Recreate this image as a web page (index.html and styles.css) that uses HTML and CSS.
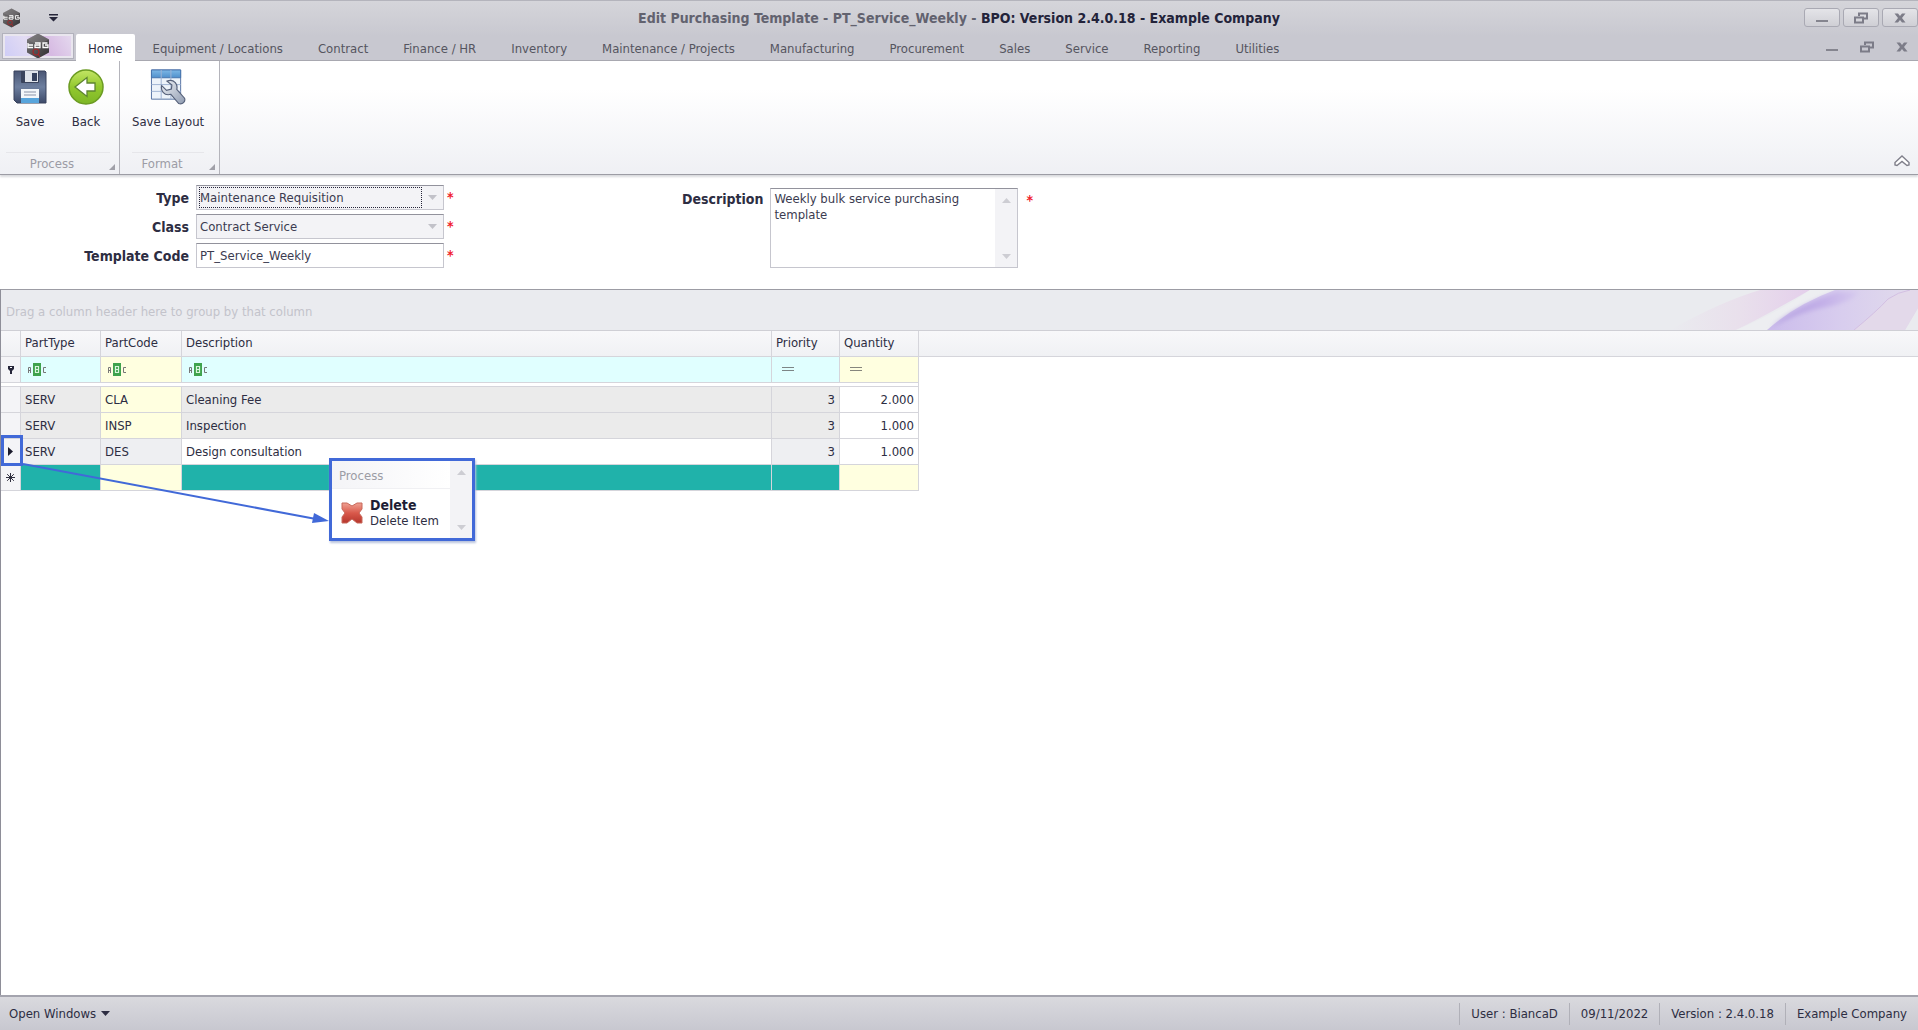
FILE: index.html
```html
<!DOCTYPE html>
<html lang="en">
<head>
    <meta charset="UTF-8">
    <meta name="viewport" content="width=device-width, initial-scale=1.0">
    <title>Edit Purchasing Template</title>
    <link rel="stylesheet" href="styles.css">
</head>
<body>
    <!-- Shared shapes -->
    <svg class="defs" width="0" height="0" aria-hidden="true">
        <defs>
            <linearGradient id="hexFill" x1="0" y1="0" x2="1" y2="1">
                <stop offset="0" stop-color="#7d7b7d"/>
                <stop offset="1" stop-color="#2f2d30"/>
            </linearGradient>
            <symbol id="logo" viewBox="0 0 24 26">
                <path d="M12 0.5 23 6.5V19.5L12 25.5 1 19.5V6.5Z" fill="url(#hexFill)"/>
                <path d="M12 0.5 1 6.5 12 12 23 6.5Z" fill="#8a888a" opacity=".4"/>
                <path d="M2 10v4.500h5M2 12h5M9 10h5v4.500H9V12h5M21.500 10H17v4.500h5V12h-3" fill="none" stroke="#fff" stroke-width="1.3"/>
                <circle cx="10" cy="19" r="3" fill="none" stroke="#a3282c" stroke-width="1.2"/>
                <path d="M12 21l2 3" stroke="#a3282c" stroke-width="1.2"/>
            </symbol>
            <symbol id="min" viewBox="0 0 14 12"><path d="M1 9h12" stroke="#85858f" stroke-width="2"/></symbol>
            <symbol id="restore" viewBox="0 0 14 12">
                <path d="M5 4V1.500h8v5H10" fill="none" stroke="#7c7c88" stroke-width="2"/>
                <path d="M1 5.500h8v5H1z" fill="none" stroke="#7c7c88" stroke-width="2"/>
            </symbol>
            <symbol id="close" viewBox="0 0 14 12">
                <path d="M1.500 1.500h3.500L7 4l2-2.500h3.500L9 6l3.500 4.500H9L7 8l-2 2.500H1.500L5 6z" fill="#7c7c88"/>
            </symbol>
            <symbol id="abc" viewBox="0 0 20 15">
                <path d="M6 1h8v13H6z" fill="#3fa34d"/>
                <path d="M1.500 11V5.500h2V11M1.500 8.500h2M19 5.500h-2.500v5H19" fill="none" stroke="#777" stroke-width="1"/>
                <path d="M8.500 4.500h3v6h-3zM8.500 7.500h3" fill="none" stroke="#d9f5dc" stroke-width="1.2"/>
            </symbol>
            <symbol id="up" viewBox="0 0 9 5"><path d="M0 5 4.500 0 9 5z" fill="currentColor"/></symbol>
            <symbol id="down" viewBox="0 0 9 5"><path d="M0 0h9L4.500 5z" fill="currentColor"/></symbol>
        </defs>
    </svg>

    <header class="window-head">
        <div class="title-bar">
            <div class="quick-access">
                <svg width="19" height="20"><use href="#logo"/></svg>
                <button class="quick-menu" aria-label="Customize quick access toolbar">
                    <svg width="9" height="8" viewBox="0 0 9 8"><path d="M0 0h9v1.500H0zM0 3h9L4.500 7.500z" fill="#26263a"/></svg>
                </button>
            </div>
            <h1 class="title"><span class="title-doc">Edit Purchasing Template - PT_Service_Weekly -</span> BPO: Version 2.4.0.18 - Example Company</h1>
            <div class="window-buttons">
                <button aria-label="Minimize"><svg width="14" height="12"><use href="#min"/></svg></button>
                <button aria-label="Restore"><svg width="14" height="12"><use href="#restore"/></svg></button>
                <button aria-label="Close"><svg width="14" height="12"><use href="#close"/></svg></button>
            </div>
        </div>
        <div class="tab-row">
            <button class="app-button" aria-label="Application menu"><svg width="24" height="26"><use href="#logo"/></svg></button>
            <nav class="tabs">
                <a class="tab active" href="#">Home</a>
                <a class="tab" href="#">Equipment / Locations</a>
                <a class="tab" href="#">Contract</a>
                <a class="tab" href="#">Finance / HR</a>
                <a class="tab" href="#">Inventory</a>
                <a class="tab" href="#">Maintenance / Projects</a>
                <a class="tab" href="#">Manufacturing</a>
                <a class="tab" href="#">Procurement</a>
                <a class="tab" href="#">Sales</a>
                <a class="tab" href="#">Service</a>
                <a class="tab" href="#">Reporting</a>
                <a class="tab" href="#">Utilities</a>
            </nav>
            <div class="child-buttons">
                <button aria-label="Minimize document"><svg width="14" height="12"><use href="#min"/></svg></button>
                <button aria-label="Restore document"><svg width="14" height="12"><use href="#restore"/></svg></button>
                <button aria-label="Close document"><svg width="14" height="12"><use href="#close"/></svg></button>
            </div>
        </div>
    </header>

    <section class="ribbon">
        <div class="ribbon-group">
            <div class="ribbon-items">
                <button class="ribbon-button">
                    <svg width="36" height="36" viewBox="0 0 36 36">
                        <defs><linearGradient id="disk" x1="0" y1="0" x2="0" y2="1"><stop offset="0" stop-color="#4a5674"/><stop offset=".5" stop-color="#6d7f9f"/><stop offset="1" stop-color="#3d4a69"/></linearGradient></defs>
                        <path d="M2 2h31l1 1v31H5l-3-3z" fill="url(#disk)" stroke="#38425d"/>
                        <path d="M9 2h18v11q0 1-1 1H10q-1 0-1-1z" fill="#39435c"/>
                        <path d="M13 2h13v11H13z" fill="#dfe3ea"/>
                        <path d="M20 4h5v8h-5z" fill="#34405c"/>
                        <path d="M9 20h18v9H9z" fill="#f4f7fa"/>
                        <path d="M9 29h18v5H9z" fill="#58a5dc"/>
                        <path d="M12 23h12M12 26h12" stroke="#8b93a8"/>
                    </svg>
                    <span>Save</span>
                </button>
                <button class="ribbon-button">
                    <svg width="36" height="36" viewBox="0 0 36 36">
                        <defs><linearGradient id="ball" x1="0" y1="0" x2="0" y2="1"><stop offset="0" stop-color="#c3e565"/><stop offset=".5" stop-color="#93c92e"/><stop offset="1" stop-color="#7db626"/></linearGradient></defs>
                        <circle cx="18" cy="18" r="17" fill="url(#ball)" stroke="#6b9b22" stroke-width="1.5"/>
                        <path d="M7 18 19 8.500V14h8v8h-8v5.500z" fill="#fff" stroke="#5d8430" stroke-width="1.3"/>
                    </svg>
                    <span>Back</span>
                </button>
            </div>
            <div class="ribbon-caption">Process</div>
            <svg class="launcher" width="6" height="6" viewBox="0 0 6 6"><path d="M6 0v6H0z" fill="#a0a0a8"/></svg>
        </div>
        <div class="ribbon-group">
            <div class="ribbon-items">
                <button class="ribbon-button">
                    <svg width="36" height="36" viewBox="0 0 36 37">
                        <defs>
                            <linearGradient id="sheet" x1="0" y1="0" x2="0" y2="1"><stop offset="0" stop-color="#7db8e6"/><stop offset="1" stop-color="#4f8fcb"/></linearGradient>
                            <linearGradient id="steel" x1="0" y1="0" x2="1" y2="1"><stop offset="0" stop-color="#f0f3f8"/><stop offset="1" stop-color="#8f9bb0"/></linearGradient>
                        </defs>
                        <path d="M1 1h30v30H1z" fill="#edf3fa" stroke="#5672a3"/>
                        <path d="M1 1h30v8H1z" fill="url(#sheet)" stroke="#4673ad"/>
                        <path d="M11 1v30M21 1v30M1 16h30M1 23h30" stroke="#9fb4d3" fill="none"/>
                        <path d="M17 12.500q5-2 8.500 1.500 2.500 3 1.500 7l8 9q1 2.500-1 4.500t-5 1l-8-9.500q-5 1.500-8-2-2.500-3-1.500-7l5 5 5-1.500.5-4z" fill="url(#steel)" stroke="#56617a" stroke-width="1.2"/>
                    </svg>
                    <span>Save Layout</span>
                </button>
            </div>
            <div class="ribbon-caption">Format</div>
            <svg class="launcher" width="6" height="6" viewBox="0 0 6 6"><path d="M6 0v6H0z" fill="#a0a0a8"/></svg>
        </div>
        <button class="collapse" aria-label="Collapse ribbon">
            <svg width="16" height="12" viewBox="0 0 16 12"><path d="M8 1 15 7.500V10l-2 .5L8 6.500 3 10.500 1 10V7.500z" fill="#fff" stroke="#7f7f8a" stroke-width="1.4"/></svg>
        </button>
    </section>

    <main class="document">
        <form class="details">
            <div class="fields">
                <label for="type">Type</label>
                <div class="combo">
                    <select id="type" class="focused"><option>Maintenance Requisition</option></select>
                    <svg width="9" height="5"><use href="#down"/></svg>
                </div>
                <span class="required">*</span>
                <label for="class">Class</label>
                <div class="combo">
                    <select id="class"><option>Contract Service</option></select>
                    <svg width="9" height="5"><use href="#down"/></svg>
                </div>
                <span class="required">*</span>
                <label for="code">Template Code</label>
                <input id="code" class="text-box" type="text" value="PT_Service_Weekly">
                <span class="required">*</span>
            </div>
            <div class="memo-field">
                <label for="description">Description</label>
                <div class="memo">
                    <textarea id="description">Weekly bulk service purchasing template</textarea>
                    <div class="scroller">
                        <svg width="9" height="5"><use href="#up"/></svg>
                        <svg width="9" height="5"><use href="#down"/></svg>
                    </div>
                </div>
                <span class="required">*</span>
            </div>
        </form>

        <section class="grid">
            <div class="group-panel">
                <span>Drag a column header here to group by that column</span>
                <svg class="swirl" width="278" height="40" viewBox="0 0 278 40">
                    <defs>
                        <linearGradient id="pink" x1="0" y1="0" x2="1" y2="0"><stop offset="0" stop-color="#eaebef"/><stop offset=".5" stop-color="#e9e0ec"/><stop offset="1" stop-color="#e4cfeb"/></linearGradient>
                        <linearGradient id="violet" x1="0" y1="0" x2="1" y2="0"><stop offset="0" stop-color="#cbbcec"/><stop offset=".5" stop-color="#d8cdee"/><stop offset="1" stop-color="#e2dcec"/></linearGradient>
                        <linearGradient id="fold" x1="0" y1="0" x2="1" y2="0"><stop offset="0" stop-color="#b39fe0"/><stop offset=".6" stop-color="#c3b0e8"/><stop offset="1" stop-color="#d6caee"/></linearGradient>
                        <filter id="soft"><feGaussianBlur stdDeviation="2"/></filter>
                    </defs>
                    <path d="M30 40Q80 12 120 0h50Q125 26 96 40z" fill="url(#pink)"/>
                    <path d="M96 40Q140 22 170 0h25Q150 18 127 40z" fill="#edeef1"/>
                    <path d="M127 40Q155 15 195 0h83v18L265 40z" fill="url(#violet)"/>
                    <path d="M130 38Q157 15 197 2h22q-7 10-33 15-30 6-56 21z" fill="url(#fold)" filter="url(#soft)"/>
                    <path d="M214 40Q236 22 248 9 258 2 270 0h8v18L265 40z" fill="#e3d9ea"/>
                    <path d="M214 40Q236 22 248 9 258 2 270 0" fill="none" stroke="#d3bfe3"/>
                </svg>
            </div>
            <table>
                <colgroup>
                    <col class="col-mark"><col class="col-type"><col class="col-code"><col class="col-desc"><col class="col-priority"><col class="col-quantity"><col>
                </colgroup>
                <thead>
                    <tr>
                        <th></th>
                        <th>PartType</th>
                        <th>PartCode</th>
                        <th>Description</th>
                        <th>Priority</th>
                        <th>Quantity</th>
                        <th class="rest"></th>
                    </tr>
                </thead>
                <tbody>
                    <tr class="filter">
                        <td class="mark"><svg width="8" height="10" viewBox="0 0 8 10"><path d="M1 1h6v3L5 6v3H3V6L1 4z" fill="#26263a"/><path d="M3 2.500h2" stroke="#fff"/></svg></td>
                        <td class="cyan"><svg width="20" height="15"><use href="#abc"/></svg></td>
                        <td class="cream"><svg width="20" height="15"><use href="#abc"/></svg></td>
                        <td class="cyan"><svg width="20" height="15"><use href="#abc"/></svg></td>
                        <td class="cyan equals"><svg width="12" height="5" viewBox="0 0 12 5"><path d="M0 .5h12M0 3.500h12" stroke="#7d8586"/></svg></td>
                        <td class="cream equals"><svg width="12" height="5" viewBox="0 0 12 5"><path d="M0 .5h12M0 3.500h12" stroke="#86867d"/></svg></td>
                        <td class="rest"></td>
                    </tr>
                    <tr class="splitter"><td colspan="6"></td><td class="rest"></td></tr>
                    <tr>
                        <td class="mark"></td>
                        <td class="locked">SERV</td>
                        <td class="cream">CLA</td>
                        <td class="locked">Cleaning Fee</td>
                        <td class="locked number">3</td>
                        <td class="number">2.000</td>
                        <td class="rest"></td>
                    </tr>
                    <tr>
                        <td class="mark"></td>
                        <td class="locked">SERV</td>
                        <td class="cream">INSP</td>
                        <td class="locked">Inspection</td>
                        <td class="locked number">3</td>
                        <td class="number">1.000</td>
                        <td class="rest"></td>
                    </tr>
                    <tr>
                        <td class="mark current"><svg width="5" height="9" viewBox="0 0 5 9"><path d="M0 0l5 4.500L0 9z" fill="#1b1b2c"/></svg></td>
                        <td class="selected">SERV</td>
                        <td class="selected">DES</td>
                        <td>Design consultation</td>
                        <td class="selected number">3</td>
                        <td class="number">1.000</td>
                        <td class="rest"></td>
                    </tr>
                    <tr>
                        <td class="mark"><svg width="9" height="9" viewBox="0 0 9 9"><path d="M4.500 0v9M0 4.500h9M1.200 1.200l6.600 6.600M7.800 1.200l-6.600 6.600" stroke="#30303f" stroke-width="1"/></svg></td>
                        <td class="teal"></td>
                        <td class="cream"></td>
                        <td class="teal"></td>
                        <td class="teal"></td>
                        <td class="cream"></td>
                        <td class="rest"></td>
                    </tr>
                </tbody>
            </table>

            <!-- Arrow from the selected row to its menu -->
            <svg class="arrow" width="306" height="62" viewBox="0 0 306 62">
                <path d="M0 1 293 56" stroke="#4169d8" stroke-width="2"/>
                <path d="M291 50 306 58 289 60z" fill="#4169d8"/>
            </svg>
            <div class="context-menu">
                <div class="menu-body">
                    <div class="menu-caption">Process</div>
                    <button class="menu-item">
                        <svg width="22" height="22" viewBox="0 0 22 22">
                            <defs><linearGradient id="cross" x1="0" y1="0" x2="0" y2="1"><stop offset="0" stop-color="#efa193"/><stop offset=".5" stop-color="#d9594b"/><stop offset="1" stop-color="#b5362c"/></linearGradient></defs>
                            <path d="M1 1h5l5 3 5-3h5v6l-3 4 3 4v6h-5l-5-4-5 4H1v-6l3-4-3-4z" fill="url(#cross)" stroke="#c8685b"/>
                        </svg>
                        <span><b>Delete</b>Delete Item</span>
                    </button>
                </div>
                <div class="scroller">
                    <svg width="9" height="5"><use href="#up"/></svg>
                    <svg width="9" height="5"><use href="#down"/></svg>
                </div>
            </div>
        </section>
    </main>

    <footer class="status-bar">
        <button class="open-windows">Open Windows <svg width="9" height="5"><use href="#down"/></svg></button>
        <div class="status-items">
            <span>User : BiancaD</span>
            <span>09/11/2022</span>
            <span>Version : 2.4.0.18</span>
            <span>Example Company</span>
        </div>
    </footer>
</body>
</html>
```

FILE: styles.css
```css
* {
    box-sizing: border-box;
}

body {
    display: flex;
    flex-direction: column;
    min-height: 100vh;
    margin: 0;
    background: #fff;
    color: #2d2d42;
    font-family: "DejaVu Sans Condensed", "Noto Sans", sans-serif;
    font-size: 13px;
    line-height: 16px;
}

button,
input,
select,
textarea {
    margin: 0;
    padding: 0;
    border: 0;
    background: none;
    color: inherit;
    font: inherit;
}

svg {
    display: block;
    flex: none;
}

.defs {
    position: absolute;
}

/* Title bar and tabs */
.window-head {
    border-top: 1px solid #b4b4bc;
    border-bottom: 1px solid #a8a8b0;
    background: linear-gradient(#d5d5da, #c8c8d0 60%, #c8c8d0);
}

.title-bar {
    display: grid;
    grid-template-columns: 1fr auto 1fr;
    align-items: center;
    height: 33px;
}

.quick-access {
    display: flex;
    align-items: center;
    gap: 28px;
    padding-left: 2px;
}

.title {
    margin: 0;
    color: #23233a;
    font-size: 14px;
    font-weight: bold;
}

.title-doc {
    color: #62626f;
}

.window-buttons {
    display: flex;
    justify-content: flex-end;
    gap: 3px;
}

.window-buttons button {
    display: flex;
    align-items: center;
    justify-content: center;
    width: 36px;
    height: 19px;
    border: 1px solid #a9a9b3;
    border-radius: 3px;
    background: linear-gradient(#e4e4e8, #cfcfd5);
}

.tab-row {
    display: flex;
    height: 26px;
}

.app-button {
    display: flex;
    align-items: center;
    justify-content: center;
    width: 70px;
    height: 24px;
    margin: 0 3px;
    border: 2px solid #e9e6ee;
    outline: 1px solid #b2b2bc;
    background: linear-gradient(60deg, #cfcdf6, #e3dcf3 40%, #d6b9e2 60%, #e4d8ee);
}

.tabs {
    display: flex;
    flex: 1;
    gap: 1px;
}

.tab {
    padding: 7px 17px 3px;
    color: #55555f;
    text-decoration: none;
    white-space: nowrap;
}

.tab.active {
    margin-bottom: -1px;
    padding: 7px 12px 3px;
    border-radius: 2px 2px 0 0;
    background: #fff;
    color: #2d2d42;
}

.child-buttons {
    display: flex;
    align-items: center;
    gap: 21px;
    padding-right: 9px;
}

/* Ribbon */
.ribbon {
    position: relative;
    z-index: 1;
    display: flex;
    height: 114px;
    border-bottom: 1px solid #9c9ca4;
    background: linear-gradient(#fff 25%, #eff0f4);
    box-shadow: 0 2px 2px #d9dadd;
}

.ribbon-group {
    position: relative;
    display: flex;
    flex-direction: column;
    padding: 8px 9px 0 6px;
    border-right: 1px solid #b4b4bb;
}

.ribbon-items {
    display: flex;
    flex: 1;
    gap: 8px;
}

.ribbon-button {
    display: flex;
    flex-direction: column;
    align-items: center;
    gap: 9px;
    min-width: 48px;
    white-space: nowrap;
}

.ribbon-group + .ribbon-group {
    padding-left: 12px;
    padding-right: 15px;
}

.ribbon-caption {
    height: 22px;
    padding: 3px 12px 0 0;
    border-top: 1px solid #e6e6ea;
    color: #9c9ca5;
    text-align: center;
}

.launcher {
    position: absolute;
    right: 4px;
    bottom: 4px;
}

.collapse {
    align-self: flex-end;
    margin: 0 8px 7px auto;
}

/* Details form */
.document {
    display: flex;
    flex: 1;
    flex-direction: column;
}

.details {
    display: flex;
    gap: 224px;
    height: 114px;
    padding: 10px 0 0;
}

.details label {
    padding: 5px 7px 0 0;
    font-size: 14px;
    font-weight: bold;
    text-align: right;
}

.fields {
    display: grid;
    grid-template-columns: 196px 248px 14px;
    grid-template-rows: 25px 25px 25px;
    row-gap: 4px;
}

.combo,
.text-box,
.memo {
    border: 1px solid #c6c6ce;
    border-top-color: #92929c;
}

.combo {
    display: flex;
    align-items: center;
    gap: 6px;
    padding: 1px 6px 1px 2px;
    background: #f3f3f6;
    color: #c2c2c9;
}

.combo select {
    flex: 1;
    height: 21px;
    border: 1px solid transparent;
    color: #3b3b50;
    appearance: none;
    outline: none;
}

.combo select.focused {
    border: 1px dotted #26263a;
}

.text-box {
    padding: 0 3px;
    color: #3b3b50;
}

.required {
    padding: 4px 0 0 3px;
    color: #f0202c;
    font-size: 14px;
    font-weight: bold;
}

.memo-field {
    display: flex;
    padding-top: 3px;
}

.memo-field label {
    padding-top: 3px;
}

.memo-field .required {
    padding-left: 8px;
}

.memo {
    display: flex;
    width: 248px;
    height: 80px;
}

.memo textarea {
    flex: 1;
    min-width: 0;
    padding: 2px 3px;
    color: #3b3b50;
    resize: none;
    overflow: hidden;
}

.scroller {
    display: flex;
    flex-direction: column;
    align-items: center;
    justify-content: space-between;
    width: 22px;
    padding: 9px 0 8px;
    background: #f3f3f6;
    color: #cdcdd3;
}

/* Items grid */
.grid {
    position: relative;
    flex: 1;
    border-top: 1px solid #9c9ca4;
    border-left: 1px solid #8e8e98;
}

.group-panel {
    display: flex;
    align-items: center;
    justify-content: space-between;
    height: 41px;
    padding-left: 5px;
    border-bottom: 1px solid #cfcfd5;
    background: #eaebef;
    color: #c3c3cb;
}

.group-panel span {
    padding-top: 4px;
}

.grid table {
    width: 100%;
    border-collapse: separate;
    border-spacing: 0;
    table-layout: fixed;
}

.col-mark {
    width: 20px;
}

.col-type {
    width: 80px;
}

.col-code {
    width: 81px;
}

.col-desc {
    width: 590px;
}

.col-priority {
    width: 68px;
}

.col-quantity {
    width: 79px;
}

.grid th,
.grid td {
    height: 26px;
    padding: 0 4px;
    border-right: 1px solid #d5d5db;
    border-bottom: 1px solid #d5d5db;
    font-weight: normal;
    text-align: left;
    white-space: nowrap;
}

.grid th {
    padding-bottom: 2px;
    background: linear-gradient(#f8f8fa, #f0f1f4);
}

.grid th.rest,
.grid td.rest {
    border-right: 0;
}

.grid td.rest {
    border-bottom: 0;
}

.grid .mark {
    padding: 0;
    background: #f4f4f7;
}

.mark svg {
    margin: 0 auto;
}

.filter td svg {
    margin-left: 2px;
}

.filter td.mark svg {
    margin: 0 auto;
}

.filter td.equals svg {
    margin-left: 6px;
}

.grid .splitter td {
    height: 4px;
    padding: 0;
}

.grid .cyan {
    background: #e0ffff;
}

.grid .cream {
    background: #ffffe0;
}

.grid .locked {
    background: #ebebeb;
}

.grid .selected {
    background: #eeeff2;
}

.grid .teal {
    background: #20b2aa;
}

.grid .number {
    text-align: right;
}

/* Highlight round the current row marker */
.grid .current {
    position: relative;
}

.current::after {
    position: absolute;
    inset: -4px -3px -2px 0;
    border: 3px solid #4169d8;
    content: "";
}

.arrow {
    position: absolute;
    top: 173px;
    left: 22px;
}

.context-menu {
    position: absolute;
    top: 168px;
    left: 328px;
    display: flex;
    width: 146px;
    border: 3px solid #4169d8;
    background: #fff;
    box-shadow: 1px 2px 2px #b9c3dd;
}

.menu-body {
    flex: 1;
}

.menu-caption {
    height: 28px;
    padding: 7px 7px 0;
    border-bottom: 1px solid #f0f0f3;
    background: linear-gradient(90deg, #f4f4f7, #fff);
    color: #9c9ca5;
}

.menu-item {
    display: flex;
    align-items: center;
    gap: 7px;
    padding: 8px 0 9px 9px;
    text-align: left;
    white-space: nowrap;
}

.menu-item b {
    display: block;
    color: #1d1d35;
    font-size: 14px;
}

/* Status bar */
.status-bar {
    display: flex;
    align-items: center;
    justify-content: space-between;
    height: 35px;
    border-top: 2px solid #a4a4ae;
    background: linear-gradient(#d9d9de, #c8c8d0);
}

.open-windows {
    display: flex;
    align-items: center;
    gap: 5px;
    padding-left: 9px;
}

.status-items {
    display: flex;
}

.status-items span {
    padding: 3px 11px;
    border-left: 1px solid #b0b0b8;
}
```
